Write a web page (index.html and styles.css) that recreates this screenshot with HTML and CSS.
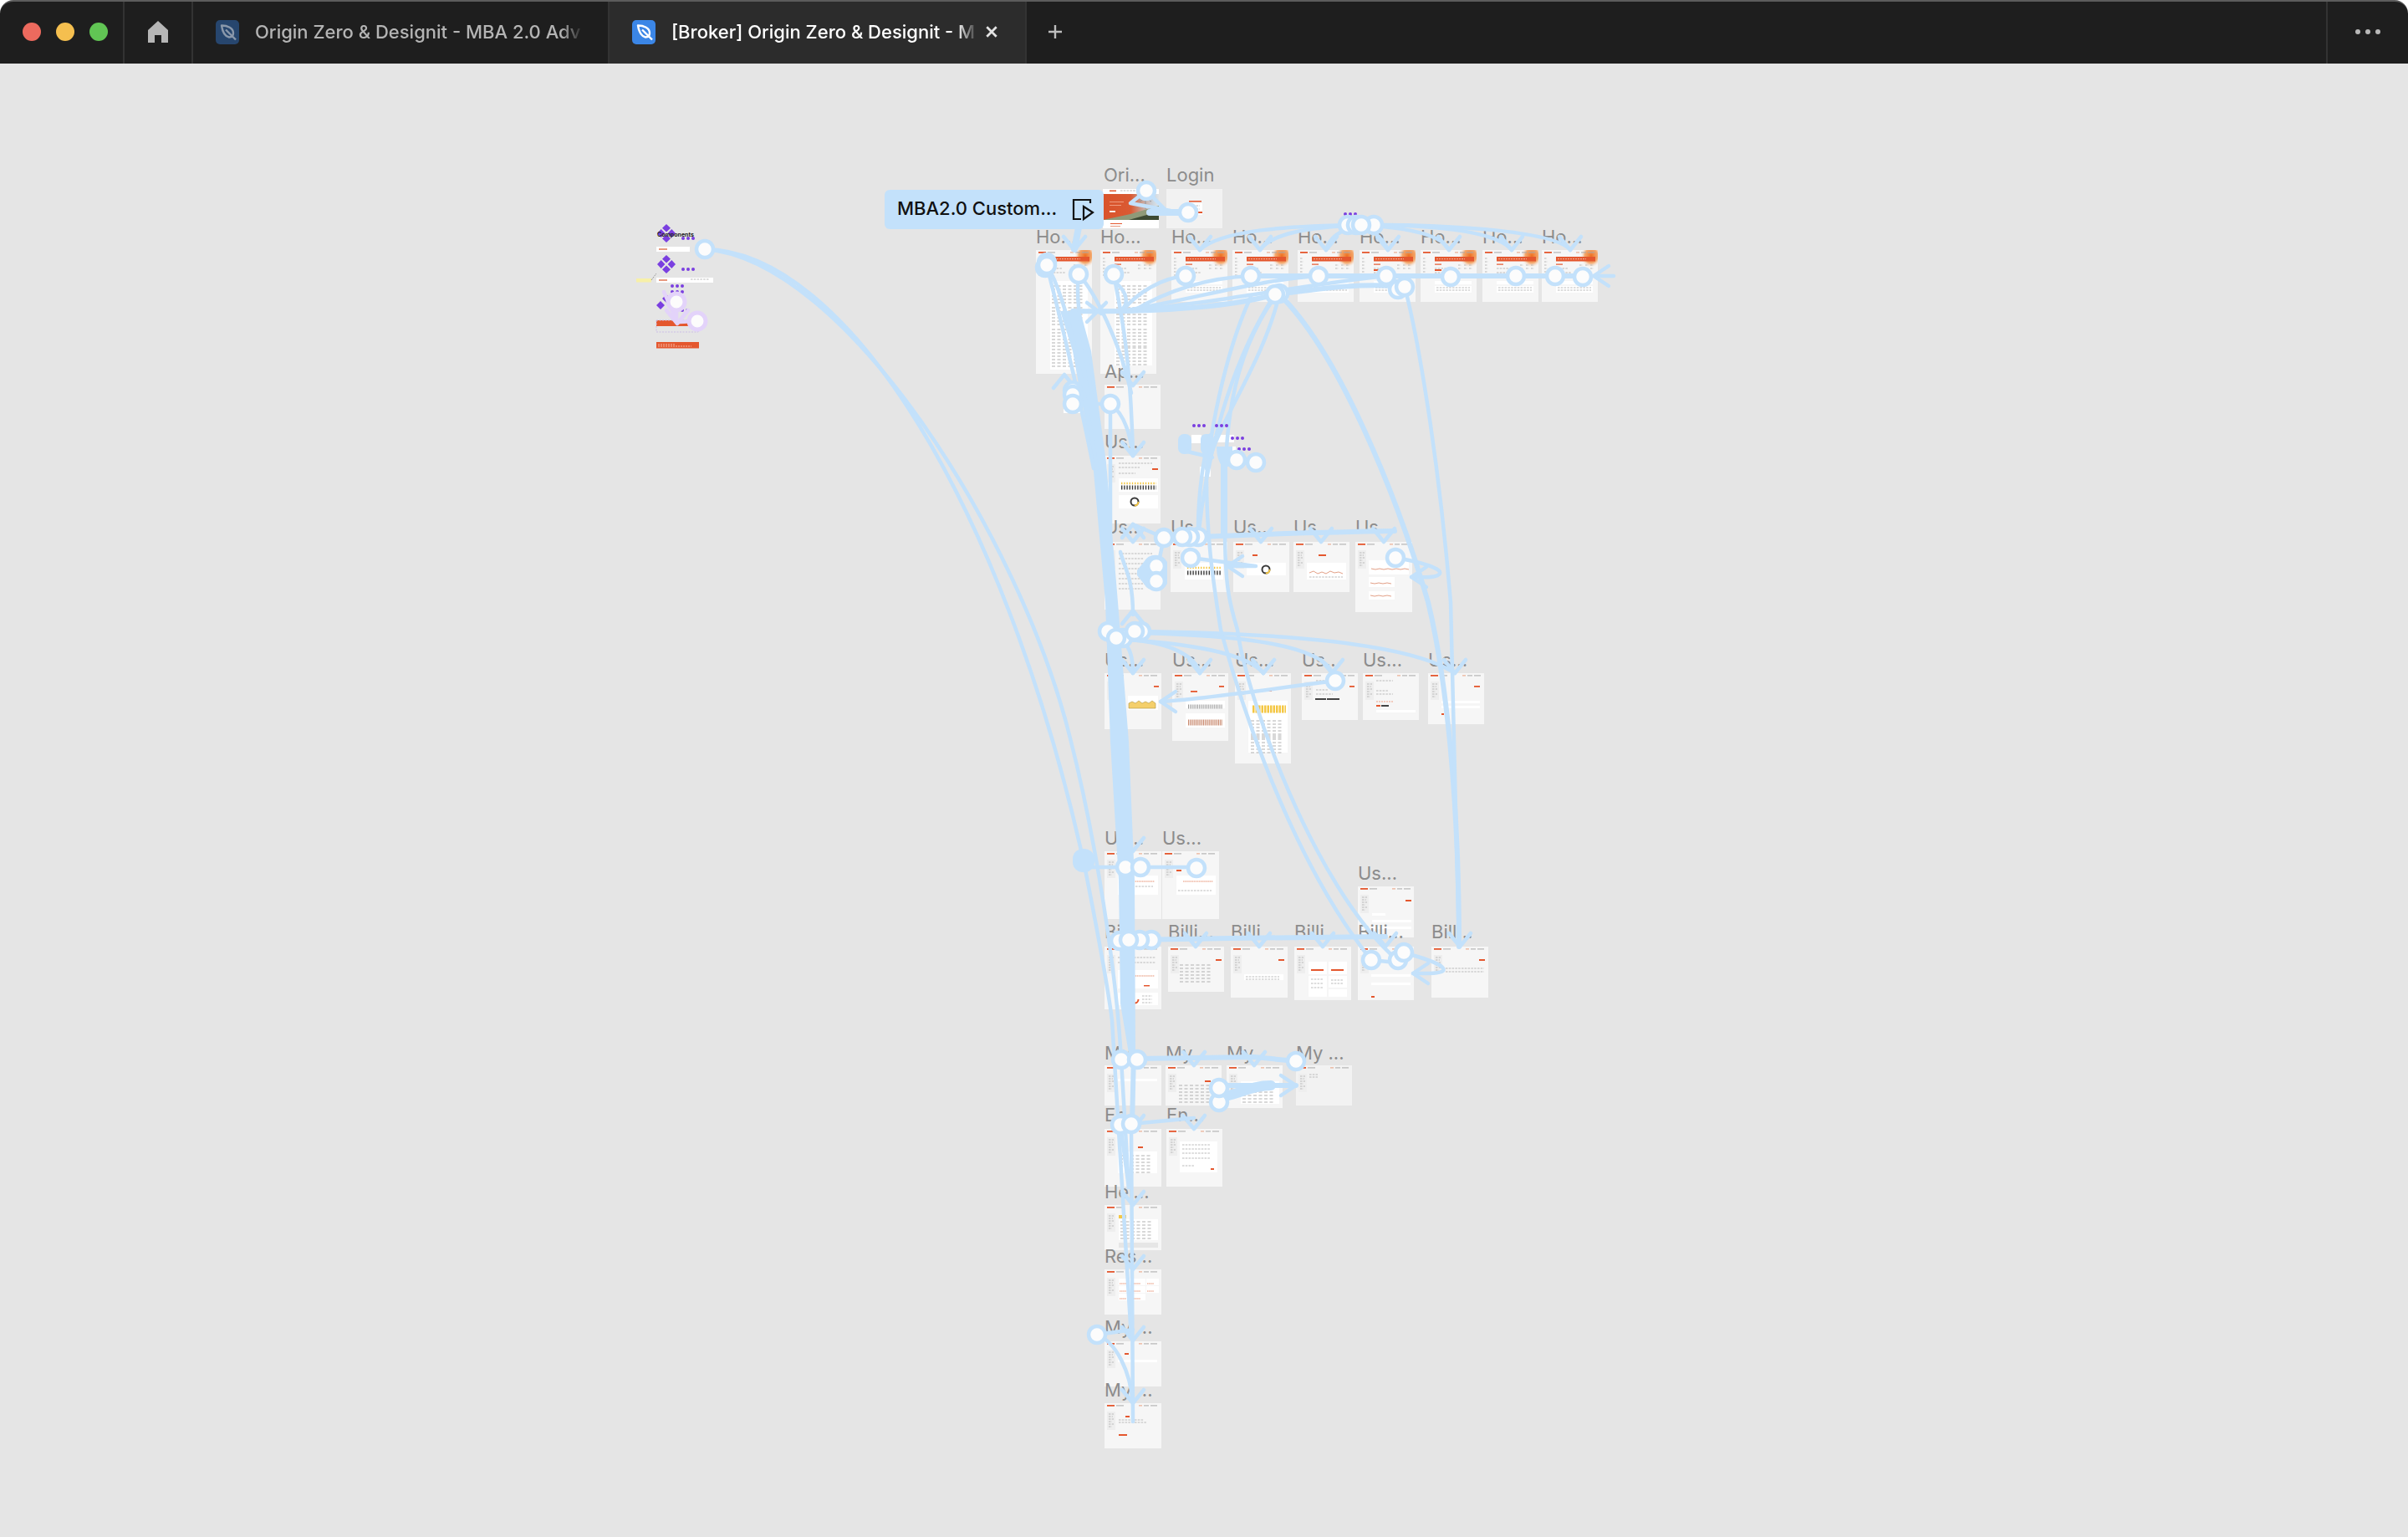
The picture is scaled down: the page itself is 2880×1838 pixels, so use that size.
FILE: index.html
```html
<!DOCTYPE html>
<html lang="en">
<head>
<meta charset="utf-8">
<title>Prototype flow</title>
<link rel="stylesheet" href="styles.css">
</head>
<body>
<div class="app">
<header class="bar">
  <div class="lights"><span class="light red"></span><span class="light amber"></span><span class="light green"></span></div>
  <div class="home">
    <svg class="home-icon" viewBox="0 0 26 28"><path d="M13 1 L25 12 V27 H17 V18 H9 V27 H1 V12 Z"/></svg>
  </div>
  <div class="tab">
    <span class="tab-icon dim"><svg viewBox="0 0 28 28"><path d="M7 6 C14 6 21 9 21 15 C21 19 18 20 16 20 C11 19 8 13 7 6 Z M12 11 L24 23"/></svg></span>
    <span class="tab-label">Origin Zero &amp; Designit - MBA 2.0 Adv</span>
  </div>
  <div class="tab active">
    <span class="tab-icon"><svg viewBox="0 0 28 28"><path d="M7 6 C14 6 21 9 21 15 C21 19 18 20 16 20 C11 19 8 13 7 6 Z M12 11 L24 23"/></svg></span>
    <span class="tab-label">[Broker] Origin Zero &amp; Designit - M</span>
    <svg class="tab-close" viewBox="0 0 14 14"><path d="M2 2 L12 12 M12 2 L2 12"/></svg>
  </div>
  <div class="plus"><svg viewBox="0 0 18 18"><path d="M9 1 V17 M1 9 H17"/></svg></div>
  <div class="spacer"></div>
  <div class="more"><i></i><i></i><i></i></div>
</header>
<main class="canvas">
<svg class="board" viewBox="0 76 2880 1762" width="2880" height="1762">
<defs>
  <radialGradient id="blob" cx="0.62" cy="0.3" r="0.62">
    <stop offset="0" stop-color="#ee6f1f"/><stop offset="0.6" stop-color="#f29a55" stop-opacity=".85"/><stop offset="1" stop-color="#f6f6f6" stop-opacity="0"/>
  </radialGradient>
  <linearGradient id="hero" x1="0" x2="1" y1="0" y2="0">
    <stop offset="0" stop-color="#d9532b"/><stop offset=".5" stop-color="#da5a33"/><stop offset=".68" stop-color="#c99a8a"/><stop offset=".9" stop-color="#cdd6de"/><stop offset="1" stop-color="#dfe4e8"/>
  </linearGradient>
  <g id="hd">
    <rect class="o" x="3" y="2" width="9" height="1.8"/>
    <rect class="g" x="14" y="2.4" width="9" height="1"/>
    <rect class="g2" x="41" y="2.4" width="4" height="1"/>
    <rect class="g" x="47" y="2.4" width="6" height="1"/>
    <rect class="g" x="55" y="2.4" width="8" height="1"/>
  </g>
  <g id="sb">
    <rect class="sidebar" x="3" y="10" width="10" height="22"/>
    <path class="t" d="M5 13h6M5 16h5M5 19h6M5 22h4M5 25h6M5 28h4"/>
  </g>
  <g id="home">
    <rect x="46" y="0" width="21" height="23" fill="url(#blob)"/>
    <rect class="o" x="17" y="8" width="47" height="5.5"/>
    <path class="tw" d="M19 10.7h34"/>
    <use href="#hd"/>
    <path class="t" d="M3 10h3M3 14h4M3 18h3M3 22h4M3 26h3M3 30h4"/>
    <rect class="o" x="17" y="16.5" width="8" height="1.2"/>
    <path class="t" d="M45 18h4M52 18h4M58 18h4M45 22h4M52 22h4M58 22h4"/>
    <path class="t" d="M17 22h14M17 27h18"/>
    <rect class="w" x="17" y="37" width="44" height="4"/>
    <rect class="w" x="17" y="43" width="44" height="8"/>
    <path class="t" d="M19 45h40M19 48h40"/>
  </g>
  <g id="rows">
    <path class="t2" d="M0 2h38M0 6h38M0 10h38M0 14h38M0 18h38M0 22h38"/>
  </g>
  <path id="ad" d="M-13 -16 L0 0 L13 -16"/>
  <path id="au" d="M-13 16 L0 0 L13 16"/>
  <path id="al" d="M18 -12 L0 0 L18 12"/>
  <path id="ar" d="M-18 -12 L0 0 L-18 12"/>
  <g id="dia">
    <path d="M0 -11 L5 -6.300 L0 -1.600 L-5 -6.300 Z M0 1.600 L5 6.300 L0 11 L-5 6.300 Z M-6.300 -5 L-1.600 0 L-6.300 5 L-11 0 Z M6.300 -5 L11 0 L6.300 5 L1.600 0 Z"/>
  </g>
  <g id="dots"><circle cx="0" cy="0" r="2"/><circle cx="6" cy="0" r="2"/><circle cx="12" cy="0" r="2"/></g>
</defs>

<!-- component column -->
<g class="purple">
  <use href="#dia" x="797" y="279"/><use href="#dia" x="797" y="316"/>
  <use href="#dots" x="817" y="285"/><use href="#dots" x="817" y="322"/>
  <use href="#dots" x="804" y="334"/><use href="#dots" x="804" y="342"/><use href="#dots" x="804" y="349"/>
  <use href="#dots" x="810" y="371"/>
  <path d="M790 360 l5 5 -5 5 -5 -5z M797 352 l5 5 -5 5 -5 -5z"/>
</g>
<text class="comp" x="786" y="283">Components</text>
<rect class="w" x="785" y="295" width="40" height="6"/>
<rect class="lg" x="788" y="297" width="10" height="2"/>
<rect class="w" x="785" y="332" width="68" height="6"/>
<rect class="lg" x="788" y="334" width="10" height="2"/>
<path class="t" d="M826 334h22"/>
<rect class="note" x="761" y="333" width="18" height="4.500"/>
<path class="slash" d="M779 335 L785 327"/>
<rect class="o" x="785" y="383" width="38" height="7"/>
<rect class="dash" x="785" y="383" width="50" height="14"/>
<rect class="o" x="785" y="409" width="51" height="7.500"/>
<path class="tw" d="M787 412h20M787 414h40"/>

<!-- frames -->
<g id="frames">
  <!-- cover + login -->
  <rect class="w" x="1319" y="226" width="67" height="47"/>
  <rect x="1319" y="232" width="67" height="31" fill="url(#hero)"/>
  <path class="sage" d="M1319 263 L1352 256 L1386 246 V263 Z"/>
  <path class="dk" d="M1350 263 L1386 253 V263 Z"/>
  <rect class="o" x="1327" y="227.500" width="8" height="1.500"/>
  <path class="t" d="M1340 228h20"/>
  <rect class="pale" x="1327" y="241" width="17" height="1"/><rect class="pale" x="1327" y="245" width="14" height="1"/>
  <rect class="w" x="1327" y="252" width="7" height="1.800"/>
  <path class="um" d="M1363 241 L1370 237 L1377 241 M1370 237 V250"/>
  <rect class="o" x="1328" y="267" width="14" height="1"/><rect class="lg" x="1328" y="270" width="12" height="1"/>
  <rect class="f2" x="1395" y="226" width="67" height="47"/>
  <rect class="o" x="1422" y="240" width="15" height="1.500"/>
  <rect class="w" x="1421" y="243" width="17" height="14"/>
  <path class="t" d="M1423 246h12M1423 250h12"/>
  <rect class="o" x="1433" y="253" width="5" height="2"/>

  <!-- home row -->
  <rect class="f" x="1239" y="299" width="67" height="148"/>
  <rect class="f" x="1316" y="299" width="67" height="148"/>
  <rect class="f" x="1401" y="299" width="67" height="62"/>
  <rect class="f" x="1474" y="299" width="67" height="62"/>
  <rect class="f" x="1552" y="299" width="67" height="62"/>
  <rect class="f" x="1626" y="299" width="67" height="62"/>
  <rect class="f" x="1699" y="299" width="67" height="62"/>
  <rect class="f" x="1773" y="299" width="67" height="62"/>
  <rect class="f" x="1844" y="299" width="67" height="62"/>
  <use href="#home" x="1239" y="299"/><use href="#home" x="1316" y="299"/><use href="#home" x="1401" y="299"/>
  <use href="#home" x="1474" y="299"/><use href="#home" x="1552" y="299"/><use href="#home" x="1626" y="299"/>
  <use href="#home" x="1699" y="299"/><use href="#home" x="1773" y="299"/><use href="#home" x="1844" y="299"/>
  <rect class="w" x="1256" y="340" width="45" height="102"/><use href="#rows" x="1258" y="340"/><use href="#rows" x="1258" y="366"/><use href="#rows" x="1258" y="392"/><use href="#rows" x="1258" y="416"/>
  <rect class="w" x="1333" y="340" width="45" height="97"/><use href="#rows" x="1335" y="340"/><use href="#rows" x="1335" y="366"/><use href="#rows" x="1335" y="392"/><use href="#rows" x="1335" y="414"/>
  <rect class="o" x="1643" y="322" width="8" height="2"/><rect class="o" x="1716" y="322" width="8" height="2"/>

  <!-- approvals + usage -->
  <rect class="f" x="1321" y="460" width="67" height="53"/><use href="#hd" x="1321" y="460"/>
  <rect class="w" x="1272" y="463" width="21" height="31"/>
  <rect class="f" x="1321" y="545" width="67" height="81"/><use href="#hd" x="1321" y="545"/><use href="#sb" x="1321" y="545"/>
  <rect class="o" x="1378" y="560" width="7" height="2"/><path class="t" d="M1338 554h40M1338 559h25M1338 566h20"/>
  <rect class="w" x="1338" y="572" width="47" height="16"/><path class="bark" d="M1341 583h42"/><path class="bary" d="M1341 578h42"/>
  <rect class="w" x="1338" y="592" width="47" height="16"/><circle class="don" cx="1357" cy="600" r="4.500"/><circle class="don2" cx="1357" cy="600" r="4.500"/>

  <rect class="f" x="1321" y="648" width="67" height="81"/><use href="#hd" x="1321" y="648"/><use href="#sb" x="1321" y="648"/><path class="t" d="M1338 662h40M1338 668h30M1338 674h38M1338 680h38M1338 686h38M1338 692h38M1338 698h38M1338 704h30"/>
  <rect class="f" x="1400" y="648" width="68" height="60"/><use href="#hd" x="1400" y="648"/><use href="#sb" x="1400" y="648"/><rect class="w" x="1417" y="673" width="46" height="20"/><path class="bark" d="M1420 685h40"/><path class="bary" d="M1420 679h40"/>
  <rect class="f" x="1475" y="648" width="67" height="60"/><use href="#hd" x="1475" y="648"/><use href="#sb" x="1475" y="648"/><rect class="o" x="1498" y="663" width="6" height="2"/><rect class="w" x="1491" y="673" width="47" height="15"/><circle class="don" cx="1514" cy="681" r="4.500"/><circle class="don2" cx="1514" cy="681" r="4.500"/>
  <rect class="f" x="1547" y="648" width="67" height="60"/><use href="#hd" x="1547" y="648"/><use href="#sb" x="1547" y="648"/><rect class="o" x="1577" y="663" width="9" height="2"/><rect class="w" x="1563" y="673" width="47" height="20"/><path class="wave" d="M1566 685 l5 -2 5 3 5 -2 5 2 5 -3 5 2 5 -1 5 2"/><path class="t" d="M1566 690h40"/>
  <rect class="f" x="1621" y="648" width="68" height="84"/><use href="#hd" x="1621" y="648"/><use href="#sb" x="1621" y="648"/><rect class="w" x="1637" y="670" width="48" height="17"/><path class="wave" d="M1640 680 l5 1 5 -1 5 1 5 -1 5 1 5 -1 5 1 5 -1 5 1"/><rect class="w" x="1637" y="690" width="31" height="12"/><path class="wave" d="M1639 697 l5 1 5 -1 5 1 5 -1 5 1"/><rect class="w" x="1637" y="707" width="31" height="10"/><path class="wave" d="M1639 712 l5 1 5 -1 5 1 5 -1 5 1"/>

  <rect class="f" x="1321" y="805" width="68" height="67"/><use href="#hd" x="1321" y="805"/><use href="#sb" x="1321" y="805"/><rect class="o" x="1380" y="820" width="6" height="1.800"/><rect class="w" x="1349" y="832" width="36" height="17"/><path class="area" d="M1350 847 V841 l4 -2 4 2 4 -3 4 3 4 -2 4 2 4 -3 4 3 V847 Z"/>
  <rect class="f" x="1402" y="805" width="67" height="81"/><use href="#hd" x="1402" y="805"/><use href="#sb" x="1402" y="805"/><rect class="o" x="1424" y="826" width="8" height="1.800"/><rect class="o" x="1458" y="820" width="6" height="1.800"/><rect class="w" x="1418" y="838" width="47" height="9"/><path class="barg" d="M1421 845h41"/><rect class="w" x="1418" y="853" width="47" height="17"/><path class="barb" d="M1421 864h41"/>
  <rect class="f" x="1477" y="805" width="67" height="108"/><use href="#hd" x="1477" y="805"/><use href="#sb" x="1477" y="805"/><rect class="o" x="1508" y="825" width="13" height="1.800"/><rect class="o" x="1534" y="820" width="7" height="1.800"/><rect class="w" x="1493" y="838" width="47" height="62"/><path class="barys" d="M1498 848h40"/><use href="#rows" x="1496" y="860"/><use href="#rows" x="1496" y="878"/>
  <rect class="f" x="1557" y="805" width="67" height="56"/><use href="#hd" x="1557" y="805"/><use href="#sb" x="1557" y="805"/><path class="t" d="M1574 814h20M1574 825h15M1574 830h20"/><rect class="k" x="1573" y="835" width="13" height="2"/><rect class="k" x="1587" y="835" width="15" height="2"/><rect class="o" x="1614" y="820" width="6" height="1.800"/>
  <rect class="f" x="1630" y="805" width="67" height="56"/><use href="#hd" x="1630" y="805"/><use href="#sb" x="1630" y="805"/><path class="t" d="M1646 814h20M1646 826h15M1646 830h20"/><path class="tw2" d="M1646 839h20"/><rect class="o" x="1646" y="843" width="5" height="2"/><rect class="k" x="1652" y="843" width="9" height="2"/><rect class="w" x="1646" y="849" width="47" height="3"/>
  <rect class="f" x="1708" y="805" width="67" height="61"/><use href="#hd" x="1708" y="805"/><use href="#sb" x="1708" y="805"/><rect class="w" x="1724" y="838" width="46" height="3"/><rect class="w" x="1724" y="844" width="46" height="3"/><rect class="o" x="1724" y="853" width="3" height="2"/><rect class="o" x="1763" y="820" width="7" height="1.800"/>

  <rect class="f" x="1321" y="1018" width="68" height="81"/><use href="#hd" x="1321" y="1018"/><use href="#sb" x="1321" y="1018"/><rect class="w" x="1337" y="1047" width="48" height="23"/><path class="tor" d="M1345 1054h36"/><path class="t" d="M1339 1060h40"/>
  <rect class="f" x="1390" y="1018" width="68" height="81"/><use href="#hd" x="1390" y="1018"/><use href="#sb" x="1390" y="1018"/><rect class="o" x="1407" y="1040" width="6" height="2"/><rect class="w" x="1407" y="1047" width="47" height="23"/><path class="tor" d="M1415 1054h36"/><path class="t" d="M1409 1065h40"/>
  <rect class="f" x="1624" y="1060" width="67" height="61"/><use href="#hd" x="1624" y="1060"/><use href="#sb" x="1624" y="1060"/><rect class="o" x="1681" y="1076" width="7" height="2"/><rect class="w" x="1641" y="1092" width="16" height="3"/><rect class="w" x="1641" y="1100" width="47" height="3"/><rect class="w" x="1641" y="1108" width="47" height="3"/><rect class="o" x="1641" y="1117" width="4" height="2"/>

  <rect class="f" x="1321" y="1132" width="68" height="75"/><use href="#hd" x="1321" y="1132"/><use href="#sb" x="1321" y="1132"/><path class="t" d="M1337 1145h45M1337 1151h45"/><rect class="w" x="1337" y="1160" width="48" height="22"/><path class="tor" d="M1345 1167h36"/><rect class="o" x="1368" y="1178" width="7" height="1.500"/><rect class="w" x="1337" y="1187" width="48" height="15"/><circle class="don3" cx="1357" cy="1195" r="4.500"/><path class="t" d="M1366 1191h12M1366 1195h12M1366 1199h12"/>
  <rect class="f" x="1397" y="1132" width="67" height="54"/><use href="#hd" x="1397" y="1132"/><use href="#sb" x="1397" y="1132"/><rect class="o" x="1454" y="1147" width="7" height="2"/><use href="#rows" x="1411" y="1152"/>
  <rect class="f" x="1472" y="1132" width="68" height="61"/><use href="#hd" x="1472" y="1132"/><use href="#sb" x="1472" y="1132"/><rect class="o" x="1529" y="1147" width="7" height="2"/><rect class="w" x="1488" y="1165" width="47" height="7"/><path class="t" d="M1490 1168h40M1490 1171h40"/>
  <rect class="f" x="1548" y="1132" width="68" height="64"/><use href="#hd" x="1548" y="1132"/><use href="#sb" x="1548" y="1132"/><rect class="w" x="1565" y="1150" width="22" height="15"/><rect class="w" x="1589" y="1150" width="22" height="15"/><rect class="o" x="1568" y="1159" width="15" height="2"/><rect class="o" x="1592" y="1159" width="15" height="2"/><rect class="w" x="1565" y="1167" width="22" height="25"/><rect class="w" x="1589" y="1167" width="22" height="14"/><rect class="w" x="1589" y="1183" width="22" height="9"/><path class="t" d="M1568 1171h14M1568 1176h14M1568 1181h14M1592 1172h14M1592 1176h14"/>
  <rect class="f" x="1624" y="1132" width="67" height="64"/><use href="#hd" x="1624" y="1132"/><use href="#sb" x="1624" y="1132"/><rect class="w" x="1640" y="1165" width="47" height="3"/><rect class="w" x="1640" y="1175" width="47" height="3"/><rect class="o" x="1640" y="1191" width="4" height="2"/>
  <rect class="f" x="1712" y="1132" width="68" height="61"/><use href="#hd" x="1712" y="1132"/><use href="#sb" x="1712" y="1132"/><rect class="o" x="1769" y="1147" width="7" height="2"/><path class="t" d="M1729 1158h46M1729 1162h46"/>

  <rect class="f" x="1321" y="1274" width="68" height="48"/><use href="#hd" x="1321" y="1274"/><use href="#sb" x="1321" y="1274"/><rect class="w" x="1337" y="1290" width="47" height="3"/>
  <rect class="f" x="1394" y="1274" width="67" height="48"/><use href="#hd" x="1394" y="1274"/><use href="#sb" x="1394" y="1274"/><rect class="o" x="1441" y="1292" width="7" height="2"/><use href="#rows" x="1410" y="1296"/>
  <rect class="f" x="1467" y="1274" width="67" height="51"/><use href="#hd" x="1467" y="1274"/><use href="#sb" x="1467" y="1274"/><rect class="w" x="1484" y="1293" width="46" height="27"/><use href="#rows" x="1486" y="1296"/>
  <rect class="f2" x="1550" y="1274" width="67" height="48"/><use href="#hd" x="1550" y="1274"/><use href="#sb" x="1550" y="1274"/><path class="t" d="M1566 1285h10M1566 1288h10"/>

  <rect class="f" x="1321" y="1350" width="68" height="69"/><use href="#hd" x="1321" y="1350"/><use href="#sb" x="1321" y="1350"/><rect class="o" x="1361" y="1371" width="6" height="2"/><rect class="w" x="1337" y="1377" width="47" height="26"/><use href="#rows" x="1339" y="1380"/>
  <rect class="f" x="1395" y="1350" width="67" height="69"/><use href="#hd" x="1395" y="1350"/><use href="#sb" x="1395" y="1350"/><rect class="w" x="1411" y="1365" width="45" height="37"/><path class="t" d="M1414 1369h34M1414 1374h34M1414 1379h34M1414 1385h34M1414 1394h14"/><rect class="o" x="1448" y="1397" width="4" height="2"/>

  <rect class="f" x="1321" y="1441" width="68" height="54"/><use href="#hd" x="1321" y="1441"/><use href="#sb" x="1321" y="1441"/><rect class="y" x="1338" y="1453" width="9" height="4"/><rect class="w" x="1338" y="1458" width="47" height="25"/><use href="#rows" x="1340" y="1459"/><rect class="lg2" x="1338" y="1486" width="47" height="6"/>
  <rect class="f" x="1321" y="1518" width="68" height="54"/><use href="#hd" x="1321" y="1518"/><use href="#sb" x="1321" y="1518"/><rect class="w" x="1338" y="1529" width="15" height="8"/><rect class="w" x="1355" y="1529" width="15" height="8"/><rect class="w" x="1371" y="1529" width="15" height="8"/><rect class="w" x="1338" y="1538" width="15" height="8"/><rect class="w" x="1355" y="1538" width="15" height="8"/><rect class="w" x="1371" y="1538" width="15" height="8"/><rect class="w" x="1338" y="1547" width="15" height="8"/><rect class="w" x="1355" y="1547" width="15" height="8"/><path class="tor" d="M1339 1535h8M1356 1535h8M1372 1535h8M1339 1544h8M1356 1544h8M1372 1544h8M1339 1553h8M1356 1553h8"/>
  <rect class="f" x="1321" y="1604" width="68" height="54"/><use href="#hd" x="1321" y="1604"/><use href="#sb" x="1321" y="1604"/><rect class="o" x="1345" y="1618" width="5" height="2"/><rect class="w" x="1337" y="1626" width="47" height="3"/>
  <rect class="f" x="1321" y="1678" width="68" height="54"/><use href="#hd" x="1321" y="1678"/><use href="#sb" x="1321" y="1678"/><rect class="o" x="1346" y="1693" width="5" height="2"/><path class="t" d="M1338 1698h30M1338 1701h34"/><rect class="o" x="1338" y="1715" width="10" height="2"/>
</g>

<!-- small stray frames in the middle of the flow -->
<rect class="w" x="1425" y="520" width="12" height="10"/><rect class="w" x="1452" y="520" width="24" height="9"/><rect class="w" x="1472" y="534" width="6" height="5"/><rect class="w" x="1435" y="558" width="13" height="12"/>

<!-- frame names -->
<g class="names">
  <text x="1320" y="217">Ori...</text><text x="1395" y="217">Login</text>
  <text x="1239" y="291">Ho...</text><text x="1316" y="291">Ho...</text><text x="1401" y="291">Ho...</text><text x="1474" y="291">Ho...</text><text x="1552" y="291">Ho...</text><text x="1626" y="291">Ho...</text><text x="1699" y="291">Ho...</text><text x="1773" y="291">Ho...</text><text x="1844" y="291">Ho...</text>
  <text x="1321" y="452">Ap...</text><text x="1321" y="536">Us...</text>
  <text x="1321" y="638">Us...</text><text x="1400" y="638">Us...</text><text x="1475" y="638">Us...</text><text x="1547" y="638">Us...</text><text x="1621" y="638">Us...</text>
  <text x="1321" y="797">Us...</text><text x="1402" y="797">Us...</text><text x="1477" y="797">Us...</text><text x="1557" y="797">Us...</text><text x="1630" y="797">Us...</text><text x="1708" y="797">Us...</text>
  <text x="1321" y="1010">Us...</text><text x="1390" y="1010">Us...</text><text x="1624" y="1052">Us...</text>
  <text x="1321" y="1122">Billi...</text><text x="1397" y="1122">Billi...</text><text x="1472" y="1122">Billi...</text><text x="1548" y="1122">Billi...</text><text x="1624" y="1122">Billi...</text><text x="1712" y="1122">Bill...</text>
  <text x="1321" y="1267">My ...</text><text x="1394" y="1267">My ...</text><text x="1467" y="1267">My ...</text><text x="1550" y="1267">My ...</text>
  <text x="1321" y="1341">En...</text><text x="1395" y="1341">En...</text>
  <text x="1321" y="1433">Hel...</text><text x="1321" y="1510">Res...</text><text x="1321" y="1595">My ...</text><text x="1321" y="1670">My ...</text>
</g>

<!-- purple links -->
<g class="violet">
  <path class="l" d="M794 349 L810 385"/><path class="l" d="M809 361 V385"/><path class="l" d="M834 384 C826 384 818 385 811 385"/>
  <use class="l" href="#ad" x="810" y="387"/>
  <circle class="vn" cx="809" cy="361" r="10"/><circle class="vn" cx="834" cy="384" r="10"/>
</g>

<!-- blue links -->
<g class="links">
  <path class="l" d="M843 298 C1010 300 1200 600 1296 1030"/>
  <path class="l" d="M843 298 C1010 310 1220 640 1280 883 C1310 1000 1335 1160 1341 1267"/>
  <path class="l" d="M1296 1030 C1310 1100 1325 1180 1330 1220 L1353 1600"/>

  <path class="l" d="M1628 269 C1540 270 1460 275 1435 299"/>
  <path class="l" d="M1628 269 C1560 272 1520 280 1507 299"/>
  <path class="l" d="M1628 269 C1600 275 1590 285 1586 299"/>
  <path class="l" d="M1628 269 C1640 275 1655 285 1660 299"/>
  <path class="l" d="M1628 269 C1680 272 1725 280 1733 299"/>
  <path class="l" d="M1628 269 C1700 268 1790 275 1808 299"/>
  <path class="l" d="M1628 269 C1720 268 1860 275 1878 299"/>
  <use class="l" href="#ad" x="1435" y="299"/><use class="l" href="#ad" x="1507" y="299"/><use class="l" href="#ad" x="1586" y="299"/><use class="l" href="#ad" x="1660" y="299"/><use class="l" href="#ad" x="1733" y="299"/><use class="l" href="#ad" x="1808" y="299"/><use class="l" href="#ad" x="1878" y="299"/><use class="l" href="#ad" x="1285" y="299"/>
  <path class="l3" d="M1290 272 L1285 298"/>
  <path class="l3" d="M1421 254 H1375"/>
  <path class="l" d="M1371 228 L1352 243 L1400 252 M1371 228 L1395 252"/>

  <!-- fan to the left of the home row -->
  <path class="l2" d="M1283 372 C1400 374 1480 365 1525 352"/>
  <path class="l" d="M1342 372 C1360 350 1390 332 1418 330"/>
  <path class="l" d="M1355 372 C1400 345 1450 332 1496 330"/>
  <path class="l" d="M1340 372 C1420 360 1500 335 1577 330"/>
  <path class="l" d="M1340 372 C1440 365 1560 340 1658 330"/>
  <path class="l2" d="M1496 330 H1893"/>
  <path class="l2" d="M1527 352 C1580 345 1630 338 1680 343"/>
  <path class="l" d="M1930 330 H1906"/>
  <path class="l" d="M1300 385 L1323 362 M1300 362 L1317 375"/>
  <use class="l" href="#al" x="1906" y="330"/>

  <!-- bundle -->
  <path class="fill" d="M1268 372 L1283 420 L1307 553 L1322 720 L1328 887 L1338 1053 L1340 1200 L1350 1260 H1358 L1357 1053 L1350 887 L1337 720 L1323 553 L1305 420 L1292 372 Z"/>
  <path class="l" d="M1252 317 C1262 360 1280 420 1308 560"/>
  <path class="l" d="M1252 317 C1272 350 1290 420 1312 560"/>
  <path class="l" d="M1290 328 C1285 370 1300 420 1305 470"/>
  <path class="l" d="M1290 328 C1310 350 1340 410 1353 470"/>
  <path class="l" d="M1333 337 C1350 350 1350 365 1340 372"/>
  <path class="l" d="M1332 328 C1340 370 1352 420 1355 545"/>
  <path class="l" d="M1328 483 V754"/>
  <path class="l" d="M1328 483 C1345 495 1352 520 1355 545"/>
  <use class="l" href="#ad" x="1355" y="461"/><use class="l" href="#ad" x="1355" y="545"/>
  <use class="l" href="#au" x="1273" y="448"/>
  <path class="l" d="M1283 483 H1328"/>
  <path class="l" d="M1353 1344 L1355 1700"/>
  <path class="l" d="M1341 1267 L1350 1420"/>
  <path class="l2" d="M1356 1260 L1354 1345"/>
  <path class="l" d="M1340 1345 L1350 1420"/>

  <!-- arcs -->
  <path class="l" d="M1525 352 C1480 420 1446 520 1433 642"/>
  <path class="l" d="M1530 352 C1510 440 1445 520 1443 570 C1443 640 1450 690 1460 753 C1470 790 1530 1010 1640 1148"/>
  <path class="l" d="M1527 352 C1470 430 1463 520 1465 630 C1465 700 1470 720 1480 753 C1490 830 1570 1060 1671 1148"/>
  <path class="l2" d="M1530 352 C1600 420 1670 590 1708 720 C1730 810 1745 960 1745 1132"/>
  <path class="l" d="M1680 343 C1695 400 1720 540 1735 720 L1745 1132"/>
  <path class="l" d="M1496 355 C1475 400 1455 470 1443 560"/>

  <!-- usage row links -->
  <path class="l" d="M1392 643 L1355 627"/>
  <path class="l2" d="M1433 642 C1480 640 1600 636 1668 635"/>
  <path class="l" d="M1355 735 C1355 690 1345 680 1340 660"/>
  <path class="l" d="M1392 643 L1380 700"/>
  <use class="l" href="#ad" x="1355" y="648"/><use class="l" href="#au" x="1355" y="627"/>
  <use class="l" href="#ad" x="1508" y="648"/><use class="l" href="#ad" x="1580" y="648"/><use class="l" href="#ad" x="1655" y="648"/>
  <use class="l" href="#au" x="1355" y="730"/>
  <path class="l" d="M1424 667 L1502 677 L1468 677"/><use class="l" href="#al" x="1468" y="677"/>
  <path class="l" d="M1669 667 C1700 672 1725 680 1722 686 C1718 692 1700 690 1688 690"/><use class="l" href="#al" x="1688" y="690"/>
  <path class="blob" d="M1368 672 a16 16 0 0 1 28 0 v26 a16 16 0 0 1 -28 0 l-8 -10 v-6 z"/>

  <!-- next row -->
  <path class="l" d="M1365 755 C1500 757 1680 765 1740 805"/>
  <path class="l" d="M1350 765 C1420 770 1490 780 1511 805"/>
  <path class="l" d="M1350 765 C1400 768 1430 785 1435 805"/>
  <path class="l" d="M1365 757 C1480 760 1575 770 1593 803"/>
  <path class="l" d="M1597 814 C1550 820 1440 836 1388 839"/>
  <path class="l" d="M1345 770 C1352 775 1355 790 1355 805"/>
  <use class="l" href="#ad" x="1355" y="805"/><use class="l" href="#ad" x="1435" y="805"/><use class="l" href="#ad" x="1511" y="805"/><use class="l" href="#ad" x="1593" y="805"/><use class="l" href="#ad" x="1740" y="805"/>
  <use class="l" href="#al" x="1388" y="839"/>

  <path class="l" d="M1293 1037 H1431"/>
  <use class="l" href="#ad" x="1355" y="1018"/>
  <path class="l2" d="M1353 1124 C1450 1122 1600 1120 1657 1120"/>
  <use class="l" href="#ad" x="1430" y="1132"/><use class="l" href="#ad" x="1506" y="1132"/><use class="l" href="#ad" x="1582" y="1132"/><use class="l" href="#ad" x="1657" y="1132"/><use class="l" href="#ad" x="1746" y="1132"/>
  <path class="l" d="M1679 1139 C1710 1148 1730 1155 1726 1161 C1720 1165 1705 1164 1690 1164"/><use class="l" href="#al" x="1690" y="1164"/>
  <path class="l" d="M1640 1148 L1679 1152"/>

  <path class="l2" d="M1360 1266 L1500 1264 L1550 1269"/>
  <use class="l" href="#ad" x="1428" y="1274"/><use class="l" href="#ad" x="1500" y="1274"/><use class="l" href="#ar" x="1550" y="1298"/>
  <path class="l2" d="M1458 1298 H1550"/>
  <path class="l4" d="M1458 1312 C1480 1310 1495 1298 1520 1298"/>
  <path class="l" d="M1353 1344 L1428 1337"/><use class="l" href="#ad" x="1428" y="1350"/><use class="l" href="#ad" x="1355" y="1350"/>
  <use class="l" href="#ad" x="1355" y="1441"/><use class="l" href="#ad" x="1355" y="1518"/><use class="l" href="#ad" x="1355" y="1603"/><use class="l" href="#ad" x="1355" y="1678"/>
  <path class="l" d="M1312 1596 L1355 1590"/>
  <path class="l" d="M1312 1596 C1335 1605 1352 1640 1355 1678"/>

  <!-- small flow blobs -->
  <rect class="fill" x="1409" y="519" width="16" height="24" rx="7"/>
  <rect class="fill" x="1436" y="519" width="16" height="24" rx="6"/>
  <path class="fill" d="M1455 534 H1474 V558 H1462 Q1455 550 1455 534 Z"/>
  <path class="l" d="M1420 540 L1450 547"/>
  <path class="l" d="M1433 632 C1433 590 1440 540 1448 520"/>
  <path class="l3" d="M1464 550 V640"/>
  <rect class="fill" x="1283" y="1015" width="26" height="28" rx="12"/>
</g>

<!-- prototype start label -->
<rect class="start" x="1058" y="227" width="262" height="47" rx="6"/>
<text class="start-name" x="1073" y="257">MBA2.0 Custom...</text>
<g class="start-icon">
  <path d="M1304 243 V239 H1284 V262 H1293"/>
  <path d="M1296 247 L1307 254 L1296 262 Z"/>
</g>

<!-- dots over links -->
<g class="purple">
  <use href="#dots" x="1428" y="509"/><use href="#dots" x="1455" y="509"/><use href="#dots" x="1474" y="524"/>
  <use href="#dots" x="1482" y="537"/><use href="#dots" x="1609" y="256"/>
</g>

<!-- nodes -->
<g class="nodes">
  <circle cx="843" cy="298" r="10"/>
  <circle cx="1371" cy="228" r="10"/><circle cx="1421" cy="254" r="10"/>
  <circle cx="1250" cy="320" r="10"/><circle cx="1252" cy="314" r="10"/><circle cx="1252" cy="317" r="10"/>
  <circle cx="1290" cy="328" r="10"/><circle cx="1332" cy="328" r="10"/><circle cx="1418" cy="330" r="10"/><circle cx="1496" cy="330" r="10"/><circle cx="1577" cy="330" r="10"/><circle cx="1658" cy="330" r="10"/><circle cx="1735" cy="331" r="10"/><circle cx="1813" cy="330" r="10"/><circle cx="1860" cy="330" r="10"/><circle cx="1893" cy="331" r="10"/>
  <circle cx="1530" cy="351" r="10"/><circle cx="1525" cy="352" r="10"/><circle cx="1672" cy="346" r="10"/><circle cx="1680" cy="343" r="10"/>
  <circle cx="1612" cy="269" r="10"/><circle cx="1643" cy="269" r="10"/><circle cx="1622" cy="269" r="10"/><circle cx="1628" cy="269" r="10"/>
  <circle cx="1283" cy="467" r="10"/><circle cx="1283" cy="472" r="10"/><circle cx="1283" cy="483" r="10"/><circle cx="1328" cy="483" r="10"/>
  <circle cx="1479" cy="550" r="10"/><circle cx="1502" cy="553" r="10"/>
  <circle cx="1433" cy="642" r="10"/><circle cx="1423" cy="642" r="10"/><circle cx="1392" cy="643" r="10"/><circle cx="1414" cy="642" r="10"/>
  <circle cx="1424" cy="667" r="10"/><circle cx="1383" cy="677" r="10"/><circle cx="1383" cy="695" r="10"/><circle cx="1669" cy="667" r="10"/>
  <circle cx="1325" cy="755" r="10"/><circle cx="1343" cy="763" r="10"/><circle cx="1335" cy="763" r="10"/><circle cx="1365" cy="755" r="10"/><circle cx="1357" cy="755" r="10"/>
  <circle cx="1597" cy="814" r="10"/>
  <circle cx="1346" cy="1037" r="10"/><circle cx="1364" cy="1037" r="10"/><circle cx="1431" cy="1038" r="10"/>
  <circle cx="1339" cy="1125" r="10"/><circle cx="1377" cy="1124" r="10"/><circle cx="1363" cy="1124" r="10"/><circle cx="1350" cy="1124" r="10"/>
  <circle cx="1640" cy="1148" r="10"/><circle cx="1672" cy="1148" r="10"/><circle cx="1679" cy="1139" r="10"/>
  <circle cx="1341" cy="1267" r="10"/><circle cx="1360" cy="1267" r="10"/><circle cx="1550" cy="1269" r="10"/>
  <circle cx="1458" cy="1318" r="10"/><circle cx="1458" cy="1301" r="10"/>
  <circle cx="1340" cy="1345" r="10"/><circle cx="1353" cy="1344" r="10"/>
  <circle cx="1312" cy="1596" r="10"/>
</g>
</svg>
</main>
</div>
</body>
</html>
```

FILE: styles.css
```css
* { box-sizing: border-box; }
html, body { margin: 0; background: #fff; }
.app { width: 2880px; height: 1838px; display: flex; flex-direction: column; overflow: hidden; }

.bar {
  height: 76px; flex: none; display: flex; align-items: stretch;
  background: #1e1e1e; border-top: 2px solid #5c5c5c;
  border-radius: 16px 16px 0 0;
  font-family: Inter, "Liberation Sans", sans-serif;
}
.lights { width: 149px; display: flex; align-items: center; gap: 18px; padding: 0 0 2px 27px; border-right: 2px solid #333; }
.light { width: 22px; height: 22px; border-radius: 50%; }
.red { background: #ed6a5e; }
.amber { background: #f5bf4f; }
.green { background: #61c554; }

.home { width: 82px; display: flex; align-items: center; justify-content: center; padding-bottom: 2px; border-right: 2px solid #333; }
.home-icon { width: 26px; height: 28px; fill: #b6b6b6; }

.tab { width: 498px; display: flex; align-items: center; gap: 19px; padding: 0 0 2px 27px; border-right: 2px solid #333; color: #b4b4b4; font-size: 22px; font-weight: 500; }
.tab.active { width: 499px; background: #2c2c2c; color: #fff; position: relative; }
.tab-icon { width: 28px; height: 29px; flex: none; border-radius: 5px; background: #3b86e6; display: flex; }
.tab-icon.dim { background: #27466e; }
.tab-icon svg { width: 28px; height: 29px; fill: none; stroke: #fff; stroke-width: 2.400; stroke-linejoin: round; }
.tab-icon.dim svg { stroke: #8a98ab; }
.tab-label { white-space: nowrap; -webkit-mask-image: linear-gradient(90deg, #000 94%, rgba(0,0,0,.15)); mask-image: linear-gradient(90deg, #000 94%, rgba(0,0,0,.15)); }
.tab-close { position: absolute; left: 449px; top: 28px; width: 16px; height: 16px; stroke: #e4e4e4; stroke-width: 2.400; fill: none; }

.plus { width: 68px; display: flex; align-items: center; justify-content: center; padding-bottom: 2px; }
.plus svg { width: 18px; height: 18px; stroke: #bdbdbd; stroke-width: 2.400; fill: none; }
.spacer { flex: 1; border-right: 2px solid #333; }
.more { width: 96px; display: flex; align-items: center; justify-content: center; gap: 6px; padding-bottom: 2px; }
.more i { width: 6px; height: 6px; border-radius: 50%; background: #b8b8b8; }

.canvas { flex: 1; background: #e5e5e5; }
.board { display: block; }

.f { fill: #f6f6f6; }
.f2 { fill: #f2f2f2; }
.w { fill: #fff; }
.o { fill: #e4572e; }
.g { fill: #a9a9a9; }
.g2 { fill: #e8a07f; }
.k { fill: #444; }
.y { fill: #f4c744; }
.lg { fill: #e89a80; }
.lg2 { fill: #e6e6e6; }
.dk { fill: #3d4a33; }
.sage { fill: #8f9a78; }
.pale { fill: #ef9b7e; }
.um { fill: none; stroke: #8f959b; stroke-width: 1; }
.sidebar { fill: #eeeeee; }
.t { stroke: #b3b3b3; stroke-width: .9; stroke-dasharray: 2.500 1.300; fill: none; }
.t2 { stroke: #a8a8a8; stroke-width: .9; stroke-dasharray: 4 2.500; fill: none; }
.tw { stroke: #f6c3b1; stroke-width: .9; stroke-dasharray: 2 1; fill: none; }
.tw2 { stroke: #ee9f85; stroke-width: 1; stroke-dasharray: 2 1; fill: none; }
.tor { stroke: #efb7a3; stroke-width: 1.400; stroke-dasharray: 1.500 .6; fill: none; }
.bark { stroke: #3a3a3a; stroke-width: 5; stroke-dasharray: 1.400 1.800; fill: none; }
.bary { stroke: #f4c744; stroke-width: 2.500; stroke-dasharray: 1.400 1.800; fill: none; }
.barys { stroke: #f4c744; stroke-width: 9; stroke-dasharray: 2.500 1; fill: none; }
.barg { stroke: #999; stroke-width: 5; stroke-dasharray: 1 1.200; fill: none; }
.barb { stroke: #c98a6f; stroke-width: 7; stroke-dasharray: 1 .8; fill: none; }
.wave { stroke: #e3a087; stroke-width: 1; fill: none; }
.area { fill: #f4cf6b; stroke: #b09340; stroke-width: .6; }
.don { fill: none; stroke: #3a3a3a; stroke-width: 2; }
.don2 { fill: none; stroke: #f4c744; stroke-width: 2; stroke-dasharray: 7 30; }
.don3 { fill: none; stroke: #e4572e; stroke-width: 2; stroke-dasharray: 18 30; }
.dash { fill: none; stroke: #cbbde6; stroke-width: 1; stroke-dasharray: 2 1.500; }
.note { fill: #f7f0a8; }
.slash { stroke: #999; stroke-width: 1; stroke-dasharray: 2 1; fill: none; }

.purple { fill: #7a3fe0; }
.comp { font: 700 7px Inter, sans-serif; fill: #222; }

.names text { font-family: Inter, "Liberation Sans", sans-serif; font-size: 22px; fill: #8c8c8c; }

.links .l, .violet .l, .links .l2, .links .l3, .links .l4 { fill: none; stroke-linecap: round; stroke-linejoin: round; }
.links { stroke: #c3e1fb; }
.links .l { stroke-width: 4.500; }
.links .l2 { stroke-width: 6; }
.links .l3 { stroke-width: 8; }
.links .l4 { stroke-width: 12; }
.links .fill, .links .blob { fill: #c3e1fb; stroke: none; }
.violet { stroke: #e3d3fa; }
.violet .l { stroke-width: 4.500; }
.violet .vn { fill: #fcfcfc; stroke: #e3d3fa; stroke-width: 5; }

.start { fill: #c3e1fb; }
.start-name { font-family: Inter, "Liberation Sans", sans-serif; font-size: 22px; font-weight: 500; fill: #111; }
.start-icon { fill: none; stroke: #111; stroke-width: 2.200; }
.nodes { fill: #fcfcfc; stroke: #c3e1fb; stroke-width: 4.500; }
```
